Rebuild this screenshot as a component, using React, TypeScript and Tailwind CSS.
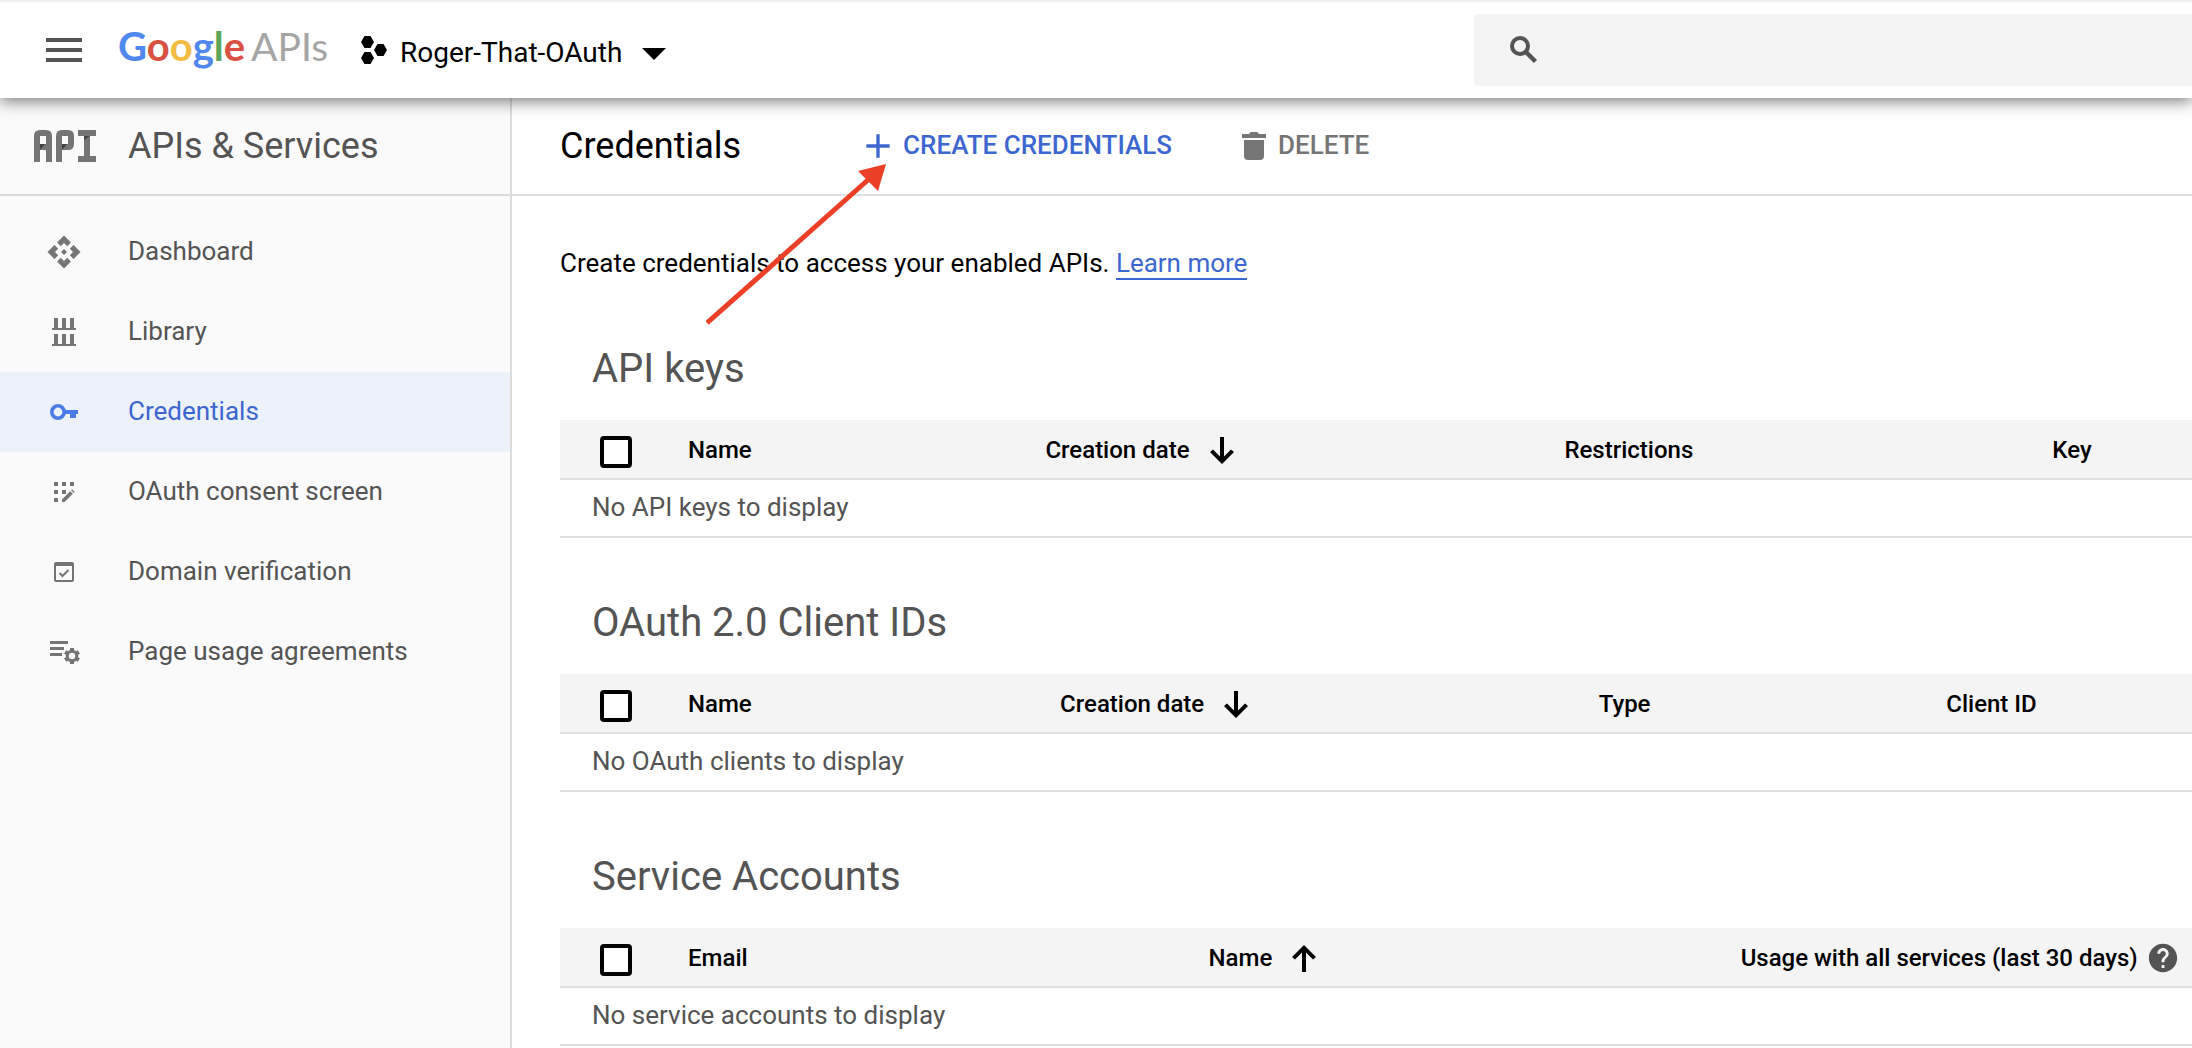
import type { ReactNode } from "react";
import { MdApi, MdAdd, MdMenu, MdHelp } from "react-icons/md";

const LibraryIcon = () => (
  <svg viewBox="0 0 32 32" className="size-8" fill="currentColor" aria-hidden="true">
    <path d="M6 2h4v10h4V2h4v10h4V2h4v10h2v2H4v-2h2zM6 18h4v10h4V18h4v10h4V18h4v10h2v2H4v-2h2z" />
  </svg>
);

const KeyIcon = () => (
  <svg viewBox="0 0 28 16" className="h-4 w-7" fill="currentColor" aria-hidden="true">
    <circle cx="8" cy="8" r="6.200" fill="none" stroke="currentColor" strokeWidth="3.600" />
    <path d="M15 6h13v4h-2v4h-6v-4h-5z" />
  </svg>
);

const ConsentIcon = () => (
  <svg viewBox="0 0 32 32" className="size-8" fill="currentColor" aria-hidden="true">
    <path d="M6 6h4v4H6zM14 6h4v4h-4zM22 6h4v4h-4zM6 14h4v4H6zM14 14h4v4h-4zM6 22h4v4H6z" />
    <path d="M14 26v-2.600l8.200-8.200 2.600 2.600L16.600 26zM23.100 14.300l1-1 2.600 2.600-1 1z" />
  </svg>
);

const VerifyIcon = () => (
  <svg viewBox="0 0 32 32" className="size-8" aria-hidden="true">
    <path
      fill="currentColor"
      fillRule="evenodd"
      d="M8 6h16a2 2 0 0 1 2 2v16a2 2 0 0 1-2 2H8a2 2 0 0 1-2-2V8a2 2 0 0 1 2-2zm0 4v14h16V10z"
    />
    <path d="M11.500 17l3 3 6-6" fill="none" stroke="currentColor" strokeWidth="2" />
  </svg>
);

const AgreementsIcon = () => (
  <svg viewBox="0 0 32 32" className="size-8" aria-hidden="true">
    <path fill="currentColor" d="M2 5h18v3H2zM2 11h14v3H2zM2 17h12v3H2z" />
    <circle cx="24" cy="20" r="4.700" fill="none" stroke="currentColor" strokeWidth="3" />
    <path
      stroke="currentColor"
      strokeWidth="4"
      d="M24 12v3M24 25v3M17.100 16l2.600 1.500M28.300 22.500l2.600 1.500M17.100 24l2.600-1.500M28.300 17.500l2.600-1.500"
    />
  </svg>
);

const ApiMark = () => (
  <svg viewBox="0 0 62 32" className="h-8 w-[62px] text-[#757575]" aria-hidden="true">
    <g fill="none" stroke="currentColor" strokeWidth="6">
      <path d="M3 32V6q0-3 3-3h6q3 0 3 3v26M3 17h12" />
      <path d="M25 32V6q0-3 3-3h6q3 0 3 3v8q0 3-3 3h-9" />
      <path d="M44 3h18M53 3v26M44 29h18" />
    </g>
    <path d="M6 14h5l-5 6zM28 14h5l-5 6zM50 6h6l-6 4z" fill="#424242" />
  </svg>
);

const ProjectIcon = () => (
  <svg viewBox="0 0 26 28" className="h-7 w-[26px]" fill="currentColor" aria-hidden="true">
    <path d="M3.500 0h6L13 6l-3.500 6h-6L0 6zM3.500 16h6l3.500 6-3.500 6h-6L0 22zM16.500 8h6l3.500 6-3.500 6h-6L13 14z" />
  </svg>
);

const CaretIcon = () => (
  <svg viewBox="0 0 24 12" className="h-3 w-6" fill="currentColor" aria-hidden="true">
    <path d="M0 0h24L12 12z" />
  </svg>
);

const SearchIcon = () => (
  <svg viewBox="0 0 28 28" className="size-7 text-[#545454]" fill="none" stroke="currentColor" aria-hidden="true">
    <circle cx="10" cy="10" r="8" strokeWidth="4" />
    <path d="M15.500 15.500l10 10" strokeWidth="4.500" />
  </svg>
);

const TrashIcon = () => (
  <svg viewBox="0 0 24 28" className="h-7 w-6" fill="currentColor" aria-hidden="true">
    <path d="M0 2h7l1.500-2h7L17 2h7v4H0zM2 8h20v16q0 4-4 4H6q-4 0-4-4z" />
  </svg>
);

const SortIcon = ({ up }: { up?: boolean }) => (
  <svg viewBox="0 0 24 27" className="ml-5 h-[27px] w-6" fill="currentColor" aria-hidden="true">
    {up ? (
      <path d="M12 0L0 12l3 2.500 7-7V27h4V7.500l7 7 3-2.500z" />
    ) : (
      <path d="M12 27L0 15l3-2.500 7 7V0h4v19.500l7-7 3 2.500z" />
    )}
  </svg>
);

const navItems: { label: string; icon: ReactNode; active?: boolean }[] = [
  { label: "Dashboard", icon: <MdApi className="size-9" /> },
  { label: "Library", icon: <LibraryIcon /> },
  { label: "Credentials", icon: <KeyIcon />, active: true },
  { label: "OAuth consent screen", icon: <ConsentIcon /> },
  { label: "Domain verification", icon: <VerifyIcon /> },
  { label: "Page usage agreements", icon: <AgreementsIcon /> },
];

type Column = { label: string; width: string; sort?: "down" | "up"; help?: boolean };

const tables: { title: string; empty: string; columns: Column[] }[] = [
  {
    title: "API keys",
    empty: "No API keys to display",
    columns: [
      { label: "Name", width: "w-[21.9%]" },
      { label: "Creation date", width: "w-[31.8%]", sort: "down" },
      { label: "Restrictions", width: "w-[29.9%]" },
      { label: "Key", width: "" },
    ],
  },
  {
    title: "OAuth 2.0 Client IDs",
    empty: "No OAuth clients to display",
    columns: [
      { label: "Name", width: "w-[22.8%]" },
      { label: "Creation date", width: "w-[33%]", sort: "down" },
      { label: "Type", width: "w-[21.3%]" },
      { label: "Client ID", width: "" },
    ],
  },
  {
    title: "Service Accounts",
    empty: "No service accounts to display",
    columns: [
      { label: "Email", width: "w-[31.9%]" },
      { label: "Name", width: "w-[32.6%]", sort: "up" },
      { label: "Usage with all services (last 30 days)", width: "", help: true },
    ],
  },
];

function CredentialTable({ title, empty, columns }: (typeof tables)[number]) {
  return (
    <section>
      <h2 className="px-8 text-[40px] leading-[58px] text-[#545454]">{title}</h2>
      <table className="mt-[22px] w-full table-fixed border-separate border-spacing-0 text-left">
        <thead>
          <tr className="h-[60px] bg-[#f4f4f4]">
            <th className="w-32 border-b-2 border-[#e0e0e0] p-0 pt-1.5 pl-10">
              <input
                type="checkbox"
                aria-label={"Select all: " + title}
                className="block size-8 appearance-none rounded border-4 border-black bg-white"
              />
            </th>
            {columns.map((c) => (
              <th
                key={c.label}
                className={"border-b-2 border-[#e0e0e0] p-0 pt-0.5 text-2xl font-medium whitespace-nowrap text-black " + c.width}
              >
                <span className="flex items-center">
                  {c.label}
                  {c.sort && <SortIcon up={c.sort === "up"} />}
                  {c.help && <MdHelp className="ml-2 size-[34px] text-[#545454]" />}
                </span>
              </th>
            ))}
          </tr>
        </thead>
        <tbody>
          <tr className="h-[58px]">
            <td
              colSpan={columns.length + 1}
              className="border-b-2 border-[#e0e0e0] px-8 pt-0 pb-0.5 text-[26px] text-[#545454]"
            >
              {empty}
            </td>
          </tr>
        </tbody>
      </table>
    </section>
  );
}

export default function App() {
  return (
    <div className="flex h-screen flex-col overflow-hidden bg-white font-[Roboto,sans-serif] text-black">
      <header className="relative z-10 flex h-[98px] shrink-0 items-center border-t-2 border-[#f1f1f1] bg-white shadow-[0_4px_14px_rgba(0,0,0,0.48)]">
        <button aria-label="Main menu" className="ml-10 text-[#545454]">
          <MdMenu className="size-12" />
        </button>
        <a
          href="#home"
          className="ml-[30px] flex w-[211px] items-baseline pb-2 font-[Lato,sans-serif] text-[39px] leading-[48px]"
        >
          <span className="text-[40px] font-bold">
            <span className="text-[#4f88ef]">G</span>
            <span className="text-[#d95140]">o</span>
            <span className="text-[#f2bd42]">o</span>
            <span className="text-[#4f88ef]">g</span>
            <span className="text-[#58a55c]">l</span>
            <span className="text-[#d95140]">e</span>
          </span>
          <span className="ml-1.5 text-[#a5a5a5]">APIs</span>
        </a>
        <button className="ml-8 flex items-center text-[28px]">
          <ProjectIcon />
          <span className="mt-1.5 ml-[13px]">Roger-That-OAuth</span>
          <span className="mt-2 ml-5">
            <CaretIcon />
          </span>
        </button>
        <label className="ml-auto flex h-[72px] w-[718px] items-center rounded-l bg-[#f4f4f4] pl-9">
          <SearchIcon />
          <input
            type="search"
            aria-label="Search"
            className="ml-4 h-full min-w-0 flex-1 bg-transparent text-[26px] outline-none"
          />
        </label>
      </header>

      <div className="flex min-h-0 flex-1">
        <aside className="w-[512px] shrink-0 border-r-2 border-[#dcdcdc] bg-[#fafafa]">
          <div className="flex h-[98px] items-center border-b-2 border-[#dcdcdc] pl-[34px]">
            <ApiMark />
            <span className="ml-8 text-[36px] text-[#545454]">APIs &amp; Services</span>
          </div>
          <nav className="mt-4">
            {navItems.map((n) => (
              <a
                key={n.label}
                href={"#" + n.label.toLowerCase().replaceAll(" ", "-")}
                className={"flex h-20 items-center text-[26px] " + (n.active ? "bg-[#ecf1fa] text-[#3c67d0]" : "text-[#545454]")}
              >
                <span className={"flex w-32 justify-center " + (n.active ? "text-[#4a7be8]" : "text-[#757575]")}>
                  {n.icon}
                </span>
                <span className="pb-0.5">{n.label}</span>
              </a>
            ))}
          </nav>
        </aside>

        <main className="min-w-0 flex-1">
          <div className="flex h-[98px] items-center border-b-2 border-[#e0e0e0] pl-12">
            <h1 className="text-[36px]">Credentials</h1>
            <div className="relative ml-[117px]">
              <button className="flex items-center text-[26px] font-medium text-[#3c67d0]">
                <MdAdd className="size-10" />
                <span className="ml-[5px] pb-0.5">CREATE CREDENTIALS</span>
              </button>
              <svg
                viewBox="0 0 184 164"
                className="pointer-events-none absolute top-9 -left-38 h-[164px] w-46"
                aria-hidden="true"
              >
                <path d="M1 161L163 17" stroke="#eb4027" strokeWidth="5" />
                <path d="M180 2L152 9l20 20z" fill="#eb4027" />
              </svg>
            </div>
            <button className="ml-[70px] flex items-center text-[26px] font-medium text-[#757575]">
              <TrashIcon />
              <span className="ml-3 pb-0.5">DELETE</span>
            </button>
          </div>
          <div className="pl-12">
            <p className="pt-[49px] text-[26px] leading-9">
              Create credentials to access your enabled APIs.{" "}
              <a href="#learn" className="border-b-2 border-[#3c67d0] text-[#3c67d0]">
                Learn more
              </a>
            </p>
            <div className="mt-[59px] flex flex-col gap-14">
              {tables.map((t) => (
                <CredentialTable key={t.title} {...t} />
              ))}
            </div>
          </div>
        </main>
      </div>
    </div>
  );
}
